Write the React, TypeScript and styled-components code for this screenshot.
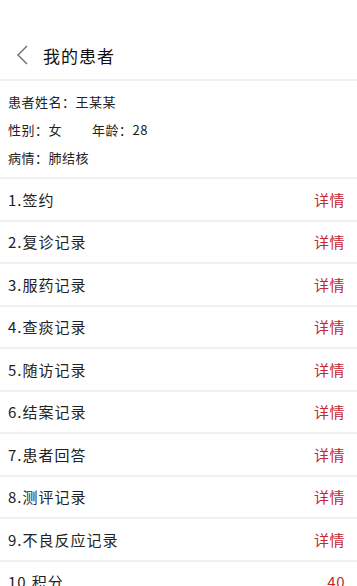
import styled, { createGlobalStyle } from "styled-components";

const GlobalStyle = createGlobalStyle`
  html, body {
    margin: 0;
    padding: 0;
    background: #fff;
  }
  body {
    font-family: "Noto Sans CJK SC", "Liberation Sans", sans-serif;
    color: #222;
  }
`;

const records = [
  { label: "1.签约", value: "详情" },
  { label: "2.复诊记录", value: "详情" },
  { label: "3.服药记录", value: "详情" },
  { label: "4.查痰记录", value: "详情" },
  { label: "5.随访记录", value: "详情" },
  { label: "6.结案记录", value: "详情" },
  { label: "7.患者回答", value: "详情" },
  { label: "8.测评记录", value: "详情" },
  { label: "9.不良反应记录", value: "详情" },
  { label: "10.积分", value: "40" },
];

export default () => {
  return (
    <Page>
      <GlobalStyle />
      <Header>
        <BackButton>
          <svg width="12" height="20" viewBox="0 0 12 20">
            <polyline
              points="11,1 2,10 11,19"
              fill="none"
              stroke="#6f6f6f"
              strokeWidth="1.4"
            />
          </svg>
        </BackButton>
        <Title>我的患者</Title>
      </Header>
      <Info>
        <InfoLine>患者姓名：王某某</InfoLine>
        <InfoLine>
          <span>性别：女</span>
          <Gap />
          <span>年龄：28</span>
        </InfoLine>
        <InfoLine>病情：肺结核</InfoLine>
      </Info>
      <List>
        {records.map((r) => (
          <Row key={r.label}>
            <RowLabel>{r.label}</RowLabel>
            <RowValue>{r.value}</RowValue>
          </Row>
        ))}
      </List>
    </Page>
  );
};

const Page = styled.div`
  width: 357px;
  height: 586px;
  overflow: hidden;
  display: flex;
  flex-direction: column;
  background: #fff;
`;

const Header = styled.div`
  display: flex;
  align-items: center;
  flex-shrink: 0;
  height: 48px;
  padding-top: 31px;
  border-bottom: 2px solid #f0f0f0;
`;

const BackButton = styled.div`
  width: 43px;
  display: flex;
  justify-content: flex-start;
  padding-left: 16px;
  box-sizing: border-box;
  svg {
    display: block;
  }
`;

const Title = styled.div`
  font-size: 17px;
  color: #111;
  letter-spacing: 1px;
`;

const Info = styled.div`
  flex-shrink: 0;
  padding: 6px 8px;
  border-bottom: 2px solid #f0f0f0;
`;

const InfoLine = styled.div`
  display: flex;
  align-items: center;
  height: 28px;
  font-size: 13px;
  color: #222;
  letter-spacing: 0.5px;
`;

const Gap = styled.span`
  width: 30px;
`;

const List = styled.div`
  display: flex;
  flex-direction: column;
  flex-shrink: 0;
`;

const Row = styled.div`
  display: flex;
  align-items: center;
  justify-content: space-between;
  height: 40.5px;
  flex-shrink: 0;
  padding: 0 12px 0 8px;
  border-bottom: 2px solid #f0f0f0;
`;

const RowLabel = styled.div`
  font-size: 15px;
  color: #222;
  letter-spacing: 1px;
`;

const RowValue = styled.div`
  font-size: 15px;
  color: #c4262d;
  letter-spacing: 0.5px;
`;
